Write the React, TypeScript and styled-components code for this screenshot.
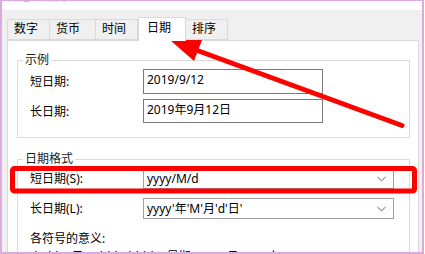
import React from 'react';
import styled, { createGlobalStyle } from 'styled-components';

const GlobalStyle = createGlobalStyle`
  html, body {
    margin: 0;
    padding: 0;
    background: #ffffff;
  }
  body {
    font-family: "Segoe UI", "Noto Sans", "Noto Sans CJK SC", sans-serif;
    font-size: 12px;
    color: #000;
  }
`;

const Screen = styled.div`
  position: relative;
  width: 425px;
  height: 254px;
  overflow: hidden;
  background: #ffffff;
`;

const Frame = styled.div`
  width: 424px;
  height: 254px;
  box-sizing: border-box;
  border: 2px solid #dcaade;
  border-top-width: 1px;
  display: flex;
  flex-direction: column;
  overflow: hidden;
  background: #f0f0f0;
`;

const TitleStrip = styled.div`
  height: 9px;
  flex: none;
  background: #ffffff;
  overflow: hidden;
  padding-left: 4px;
`;

const TitleText = styled.div`
  margin-top: -11px;
  line-height: 14px;
  color: #c4c4c4;
  font-size: 12px;
`;

const Body = styled.div`
  flex: 1;
  display: flex;
  flex-direction: column;
  padding: 7px 3px 0 5px;
  min-height: 0;
`;

const TabRow = styled.div`
  display: flex;
  align-items: flex-end;
  height: 23px;
  flex: none;
  position: relative;
  z-index: 1;
`;

const Tab = styled.div<{ active?: boolean; w: number }>`
  box-sizing: border-box;
  width: ${(p) => p.w}px;
  height: ${(p) => (p.active ? 24 : 21)}px;
  margin-bottom: ${(p) => (p.active ? -1 : 0)}px;
  border: 1px solid #d9d9d9;
  border-bottom: ${(p) => (p.active ? 'none' : '1px solid #d9d9d9')};
  border-left-width: ${(p) => (p.active ? 1 : 0)}px;
  background: ${(p) => (p.active ? '#ffffff' : '#f0f0f0')};
  display: flex;
  align-items: center;
  padding: ${(p) => (p.active ? '0 0 4px 8px' : '0 0 1px 6px')};
  line-height: 16px;
  &:first-child {
    border-left-width: 1px;
  }
`;

const Panel = styled.div`
  flex: 1;
  background: #ffffff;
  border: 1px solid #d9d9d9;
  border-bottom: none;
  padding: 11px 8px 0 9px;
  min-height: 0;
`;

const Group = styled.fieldset<{ gapBelow?: number }>`
  margin: 0 0 ${(p) => p.gapBelow ?? 0}px 0;
  border: 1px solid #dcdcdc;
  padding: 1px 12px 14px 12px;
  min-width: 0;
`;

const GroupTitle = styled.legend`
  margin-left: -7px;
  padding: 0 2px;
  line-height: 16px;
  color: #1a1a1a;
`;

const Row = styled.div<{ gapTop?: number }>`
  display: grid;
  grid-template-columns: 113px 1fr;
  align-items: center;
  margin-top: ${(p) => p.gapTop ?? 0}px;
`;

const Label = styled.div`
  line-height: 16px;
  padding-top: 1px;
`;

const TextBox = styled.div<{ h: number }>`
  box-sizing: border-box;
  width: 180px;
  height: ${(p) => p.h}px;
  border: 1px solid #7a7a7a;
  padding: 1px 3px 0 3px;
  line-height: 18px;
`;

const Combo = styled.div<{ h: number }>`
  box-sizing: border-box;
  width: 251px;
  height: ${(p) => p.h}px;
  border: 1px solid #a0a0a0;
  padding: 0 7px 0 3px;
  display: flex;
  align-items: center;
  justify-content: space-between;
  line-height: 16px;
`;

const Note = styled.div`
  margin-top: 12px;
  line-height: 16px;
`;

const NoteLine = styled.div`
  margin-top: 2px;
  line-height: 16px;
  white-space: nowrap;
`;

const Overlay = styled.svg`
  position: absolute;
  left: 0;
  top: 0;
  pointer-events: none;
`;

const Chevron = () => (
  <svg width="9" height="6" viewBox="0 0 9 6">
    <polyline points="0.5,1 4.5,4.8 8.5,1" fill="none" stroke="#606060" strokeWidth="1" />
  </svg>
);

const tabs = [
  { name: '数字', w: 43 },
  { name: '货币', w: 46 },
  { name: '时间', w: 42 },
  { name: '日期', w: 48, active: true },
  { name: '排序', w: 42 },
];

export default function App() {
  return (
    <Screen>
      <GlobalStyle />
      <Frame>
        <TitleStrip>
          <TitleText>自定义格式</TitleText>
        </TitleStrip>
        <Body>
          <TabRow>
            {tabs.map((t) => (
              <Tab key={t.name} w={t.w} active={t.active}>
                {t.name}
              </Tab>
            ))}
          </TabRow>
          <Panel>
            <Group gapBelow={13}>
              <GroupTitle>示例</GroupTitle>
              <Row>
                <Label>短日期:</Label>
                <TextBox h={25}>2019/9/12</TextBox>
              </Row>
              <Row gapTop={5}>
                <Label>长日期:</Label>
                <TextBox h={24}>2019年9月12日</TextBox>
              </Row>
            </Group>
            <Group>
              <GroupTitle>日期格式</GroupTitle>
              <Row>
                <Label>短日期(S):</Label>
                <Combo h={21}>
                  <span>yyyy/M/d</span>
                  <Chevron />
                </Combo>
              </Row>
              <Row gapTop={9}>
                <Label>长日期(L):</Label>
                <Combo h={21}>
                  <span>yyyy'年'M'月'd'日'</span>
                  <Chevron />
                </Combo>
              </Row>
              <Note>各符号的意义:</Note>
              <NoteLine>d, dd = 日；ddd, dddd = 星期；M = 月；y = 年</NoteLine>
            </Group>
          </Panel>
        </Body>
      </Frame>
      <Overlay width="425" height="254" viewBox="0 0 425 254">
        <rect x="12.5" y="168.5" width="402" height="22.5" rx="2" fill="none" stroke="#ff0000" strokeWidth="5" />
        <line x1="402" y1="125.5" x2="196" y2="50" stroke="#ff0000" strokeWidth="5" strokeLinecap="round" />
        <polygon points="170,40 202,40 194,61" fill="#ff0000" />
      </Overlay>
    </Screen>
  );
}
